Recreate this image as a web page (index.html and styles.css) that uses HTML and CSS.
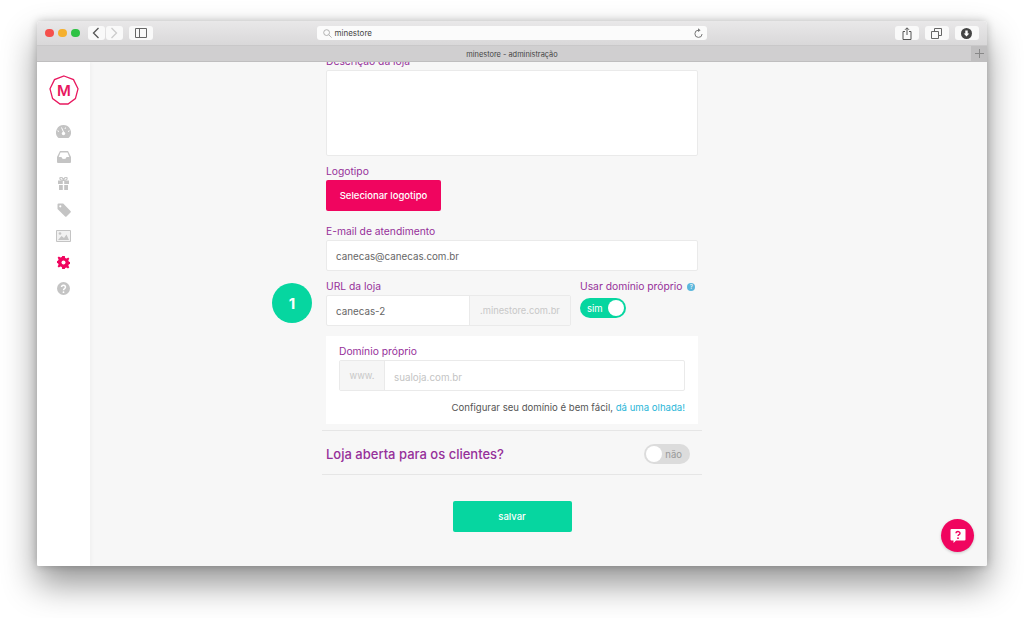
FILE: index.html
```html
<!DOCTYPE html>
<html lang="pt-BR">
  <head>
    <meta charset="UTF-8" />
    <meta name="viewport" content="width=device-width, initial-scale=1.0" />
    <title>minestore - administração</title>
    <link rel="stylesheet" href="styles.css">
  </head>
  <body>
    <div class="window">
      <div class="toolbar">
        <div class="lights">
          <span class="light red"></span>
          <span class="light yellow"></span>
          <span class="light green"></span>
        </div>
        <div class="nav-group">
          <span class="tool-btn nav-btn">
            <svg width="8" height="12" viewBox="0 0 8 12"><path d="M6.5 1L1.5 6l5 5" fill="none" stroke="#555" stroke-width="1.3"/></svg>
          </span>
          <span class="tool-btn nav-btn">
            <svg width="8" height="12" viewBox="0 0 8 12"><path d="M1.5 1l5 5-5 5" fill="none" stroke="#ccc" stroke-width="1.3"/></svg>
          </span>
        </div>
        <span class="tool-btn side-btn">
          <svg width="12" height="10" viewBox="0 0 12 10"><path d="M.5.5h11v9H.5zM4.5.5v9" fill="none" stroke="#666" stroke-width="1"/></svg>
        </span>
        <div class="url-bar">
          <svg width="9" height="9" viewBox="0 0 9 9"><circle cx="3.6" cy="3.6" r="2.9" fill="none" stroke="#aaa" stroke-width=".9"/><path d="M5.8 5.8L8.6 8.6" stroke="#aaa" stroke-width=".9"/></svg>
          <span class="url-text">minestore</span>
          <svg class="reload" width="10" height="11" viewBox="0 0 10 11"><path d="M5.5 2.2a3.6 3.6 0 1 0 3.6 3.8" fill="none" stroke="#777" stroke-width="1"/><path d="M5 .2l2.6 2L5 4z" fill="#777"/></svg>
        </div>
        <div class="right-tools">
          <span class="tool-btn right-btn">
            <svg width="10" height="13" viewBox="0 0 10 13"><path d="M3 4.5H1v8h8v-8H7M5 8V1M3 2.8L5 .8l2 2" fill="none" stroke="#555" stroke-width="1"/></svg>
          </span>
          <span class="tool-btn right-btn">
            <svg width="11" height="11" viewBox="0 0 11 11"><path d="M3.5 3V.5h7v7H8M.5 3.5h7v7h-7z" fill="none" stroke="#666" stroke-width="1"/></svg>
          </span>
          <span class="tool-btn right-btn">
            <svg width="11" height="11" viewBox="0 0 11 11"><circle cx="5.5" cy="5.5" r="5.5" fill="#444"/><path d="M4.3 2.4h2.4v3h1.6L5.5 8.6 2.7 5.4h1.6z" fill="#fff"/></svg>
          </span>
        </div>
      </div>

      <div class="tabbar">
        <span class="tab-title">minestore - administração</span>
        <span class="tab-plus">
          <svg width="9" height="9" viewBox="0 0 9 9"><path d="M4.5 0v9M0 4.5h9" stroke="#888" stroke-width="1"/></svg>
        </span>
      </div>

      <div class="app">
        <div class="sidebar">
          <svg class="logo" width="30" height="30" viewBox="0 0 30 30">
            <path d="M15 1l9.5 3.6 4.5 9.2-2.600 9.800L19 29h-8l-7.400-5.400L1 13.800l4.500-9.200z" fill="none" stroke="#e8185f" stroke-width="1.300"/>
            <text x="15" y="20.500" text-anchor="middle" class="logo-m">M</text>
          </svg>
          <ul class="menu">
            <li>
              <svg width="15" height="13" viewBox="0 0 15 13"><path d="M7.500 0a7.500 7.500 0 0 0-6 12l1 1h10l1-1a7.500 7.500 0 0 0-6-12z" fill="#c4c4c4"/><path d="M7.500 7L5.500 2.500M3 6.500l-1.500-.7M12 6.500l1.500-.7M9.500 2.500L9 4" stroke="#fff" stroke-width="1"/><circle cx="7.500" cy="8.500" r="1.700" fill="#fff"/></svg>
            </li>
            <li>
              <svg width="14" height="12" viewBox="0 0 14 12"><path d="M3 0h8l3 6v5a1 1 0 0 1-1 1H1a1 1 0 0 1-1-1V6z" fill="#c4c4c4"/><path d="M3.500 1.500h7l1.800 4.500H9.500a2.500 2 0 0 1-5 0H1.700z" fill="#fff"/></svg>
            </li>
            <li>
              <svg width="13" height="13" viewBox="0 0 13 13"><path d="M1 3.500h4.800V7H1zM7.200 3.500H12V7H7.200zM2 8h3.800v5H2zM7.200 8H11v5H7.200z" fill="#c4c4c4"/><path d="M6.500 3.500C4 3.500 2.500 2.500 3 1s3-.8 3.500 2.500C7 .2 9.500-.5 10 1s-1 2.500-3.500 2.500z" fill="none" stroke="#c4c4c4" stroke-width="1.200"/></svg>
            </li>
            <li>
              <svg width="14" height="14" viewBox="0 0 14 14"><path d="M.5 1.500a1 1 0 0 1 1-1h4.700L13.500 8a1 1 0 0 1 0 1.400l-4 4a1 1 0 0 1-1.400 0L.5 6z" fill="#c4c4c4"/><circle cx="3.300" cy="3.300" r="1.100" fill="#fff"/></svg>
            </li>
            <li>
              <svg width="15" height="12" viewBox="0 0 15 12"><path d="M.5.500h14v11H.500z" fill="#f1f1f1" stroke="#c4c4c4"/><path d="M2 10l3.500-4 2.500 2 2.500-3.500L13 10z" fill="#c4c4c4"/><circle cx="4" cy="3.500" r="1.300" fill="#c4c4c4"/></svg>
            </li>
            <li>
              <svg width="13" height="13" viewBox="0 0 13 13"><path d="M5.200 0h2.600l.4 1.900 1.400.6L11.300 1.500l1 1.300-1 1.500.6 1.400 1.900.4v1.800l-1.900.4-.6 1.400 1 1.600-1.300 1.200-1.500-1-1.400.6L7.800 13H5.200l-.4-1.900-1.400-.6-1.600 1L.6 10.200l1-1.500L1 7.300-.1 6.900V5.100L1 4.700l.6-1.400-1-1.500L1.800 .6l1.600 1 1.400-.6z" fill="#f0055f"/><circle cx="6.500" cy="6.500" r="2" fill="#fff"/></svg>
            </li>
            <li>
              <svg width="13" height="13" viewBox="0 0 13 13"><circle cx="6.500" cy="6.500" r="6.500" fill="#c4c4c4"/><path d="M4.500 5a2 1.800 0 1 1 3 1.600c-.7.400-1 .8-1 1.600" fill="none" stroke="#fff" stroke-width="1.500"/><circle cx="6.500" cy="10.200" r=".9" fill="#fff"/></svg>
            </li>
          </ul>
        </div>

        <div class="main">
          <form class="form">
            <label class="label">Descrição da loja</label>
            <div class="field textarea"></div>

            <label class="label">Logotipo</label>
            <button type="button" class="btn btn-pink">Selecionar logotipo</button>

            <label class="label">E-mail de atendimento</label>
            <div class="field input">canecas@canecas.com.br</div>

            <div class="url-row">
              <span class="step">1</span>
              <div class="url-col">
                <label class="label">URL da loja</label>
                <div class="field group">
                  <span class="group-value">canecas-2</span>
                  <span class="addon addon-right">.minestore.com.br</span>
                </div>
              </div>
              <div class="own-col">
                <label class="label">Usar domínio próprio
                  <span class="hint">?</span>
                </label>
                <span class="switch switch-on">
                  <span class="switch-text">sim</span>
                  <span class="knob"></span>
                </span>
              </div>
            </div>

            <div class="domain-card">
              <label class="label">Domínio próprio</label>
              <div class="field group">
                <span class="addon addon-left">www.</span>
                <span class="group-value placeholder">sualoja.com.br</span>
              </div>
              <p class="domain-help">Configurar seu domínio é bem fácil, <a href="#">dá uma olhada!</a></p>
            </div>

            <div class="open-row">
              <span class="open-title">Loja aberta para os clientes?</span>
              <span class="switch switch-off">
                <span class="knob"></span>
                <span class="switch-text">não</span>
              </span>
            </div>

            <div class="actions">
              <button type="button" class="btn btn-green">salvar</button>
            </div>
          </form>

          <span class="fab">
            <svg width="16" height="16" viewBox="0 0 16 16"><path d="M1.500 1h13a1 1 0 0 1 1 1v9.500a1 1 0 0 1-1 1H6L3.500 15v-2.500h-2a1 1 0 0 1-1-1V2a1 1 0 0 1 1-1z" fill="#fff"/><path d="M6 5.200a2 1.700 0 1 1 3 1.500c-.7.400-1 .7-1 1.400" fill="none" stroke="#f0055f" stroke-width="1.400"/><circle cx="8" cy="10.200" r=".9" fill="#f0055f"/></svg>
          </span>
        </div>
      </div>
    </div>
  </body>
</html>
```

FILE: styles.css
```css
* {
  box-sizing: border-box;
  margin: 0;
  padding: 0;
}

body {
  font-family: "Inter", "Liberation Sans", sans-serif;
  background-color: #fff;
  width: 1024px;
  height: 618px;
  padding: 21px 37px 52px;
  overflow: hidden;
  color: #666;
}

.window {
  height: 545px;
  display: flex;
  flex-direction: column;
  border-radius: 4px 4px 2px 2px;
  overflow: hidden;
  box-shadow: 0 18px 34px rgba(0, 0, 0, 0.42), 0 0 8px rgba(0, 0, 0, 0.22);
}

/* barra do navegador */
.toolbar {
  height: 25px;
  flex-shrink: 0;
  display: flex;
  align-items: center;
  padding: 0 8px;
  background: linear-gradient(to bottom, #e9e8e9, #d9d8d9);
  border-bottom: 1px solid #c9c8c9;
}

.lights {
  display: flex;
  gap: 4.500px;
  margin-right: 8px;
}

.light {
  width: 8.500px;
  height: 8.500px;
  border-radius: 50%;
}

.red {
  background-color: #f5504c;
}

.yellow {
  background-color: #f5b02e;
}

.green {
  background-color: #2ec244;
}

.tool-btn {
  height: 14px;
  display: flex;
  align-items: center;
  justify-content: center;
  background-color: #f9f9f9;
  border-radius: 3px;
}

.nav-group {
  display: flex;
  gap: 1px;
  margin-right: 6px;
}

.nav-btn {
  width: 17px;
}

.side-btn {
  width: 24px;
  margin-right: 164px;
}

.url-bar {
  width: 390px;
  height: 14px;
  display: flex;
  align-items: center;
  padding: 0 4px 0 6px;
  background-color: #fbfbfb;
  border-radius: 3px;
}

.url-text {
  font-size: 8px;
  color: #444;
  margin-left: 3px;
  flex: 1;
}

.right-tools {
  display: flex;
  gap: 5.500px;
  margin-left: 188px;
}

.right-btn {
  width: 24.500px;
}

.tabbar {
  height: 16px;
  padding-top: 1px;
  flex-shrink: 0;
  display: flex;
  align-items: center;
  justify-content: center;
  position: relative;
  background-color: #d0cfd0;
  border-bottom: 1px solid #bfbebf;
}

.tab-title {
  font-size: 7.400px;
  color: #444;
}

.tab-plus {
  position: absolute;
  right: 0;
  top: 0;
  width: 16px;
  height: 15px;
  display: flex;
  align-items: center;
  justify-content: center;
  background-color: #c0bfc0;
}

/* aplicação */
.app {
  flex: 1;
  display: flex;
  min-height: 0;
  background-color: #f7f7f7;
}

.sidebar {
  width: 53px;
  flex-shrink: 0;
  background-color: #fff;
  display: flex;
  flex-direction: column;
  align-items: center;
  padding-top: 13px;
  box-shadow: 1px 0 4px rgba(0, 0, 0, 0.04);
}

.logo-m {
  font-family: "Inter", sans-serif;
  font-size: 15px;
  font-weight: 600;
  fill: #e8185f;
}

.menu {
  list-style: none;
  margin-top: 13px;
}

.menu li {
  height: 26.200px;
  display: flex;
  align-items: center;
  justify-content: center;
}

.main {
  flex: 1;
  position: relative;
  overflow: hidden;
}

.form {
  width: 372px;
  margin: -8px 0 0 236px;
}

.label {
  display: block;
  font-size: 10.300px;
  line-height: 14px;
  color: #96309a;
  margin-bottom: 2px;
}

.field {
  background-color: #fff;
  border: 1px solid #eaeaea;
  border-radius: 2px;
}

.textarea {
  height: 86px;
  margin-bottom: 8px;
}

.input {
  height: 31px;
  line-height: 31px;
  padding: 0 9px;
  font-size: 9.800px;
  color: #666;
  margin-bottom: 8px;
}

.btn {
  display: block;
  border: none;
  border-radius: 2px;
  color: #fff;
  font-family: inherit;
  font-weight: 500;
  cursor: pointer;
}

.btn-pink {
  width: 115px;
  height: 31px;
  font-size: 9.500px;
  background-color: #f0055f;
  margin-bottom: 13px;
}

.btn-green {
  width: 119px;
  height: 31px;
  font-size: 9.500px;
  background-color: #06d6a0;
}

.url-row {
  display: flex;
  position: relative;
}

.step {
  position: absolute;
  left: -54px;
  top: 4px;
  width: 40px;
  height: 40px;
  border-radius: 50%;
  background-color: #06d6a0;
  color: #fff;
  font-size: 15px;
  font-weight: 700;
  display: flex;
  align-items: center;
  justify-content: center;
}

.url-col {
  width: 245px;
  flex-shrink: 0;
  margin-right: 9px;
}

.group {
  display: flex;
  height: 31px;
  overflow: hidden;
}

.group-value {
  flex: 1;
  line-height: 31px;
  padding: 0 9px;
  font-size: 9.800px;
  color: #666;
}

.placeholder {
  color: #c4c4c4;
  line-height: 33px;
}

.addon {
  background-color: #f6f6f6;
  color: #c8c8c8;
  font-size: 9.300px;
  line-height: 29px;
  text-align: center;
}

.addon-right {
  width: 101px;
  border-left: 1px solid #eaeaea;
}

.addon-left {
  width: 45px;
  border-right: 1px solid #eaeaea;
}

.own-col {
  flex: 1;
  min-width: 0;
  white-space: nowrap;
}

.hint {
  display: inline-block;
  width: 8px;
  height: 8px;
  margin-left: 2px;
  border-radius: 50%;
  background-color: #5bb7dc;
  color: #fff;
  font-size: 6px;
  line-height: 8px;
  text-align: center;
  vertical-align: 1px;
}

.switch {
  display: flex;
  align-items: center;
  justify-content: space-between;
  width: 46px;
  height: 20px;
  border-radius: 10px;
  padding: 0 2px;
  font-size: 9.500px;
}

.switch-on {
  background-color: #06d6a0;
  color: #fff;
  margin-top: 5px;
  padding-left: 7px;
}

.switch-off {
  background-color: #dcdcdc;
  color: #999;
  padding-right: 8px;
}

.knob {
  width: 16px;
  height: 16px;
  border-radius: 50%;
  background-color: #fff;
}

.domain-card {
  margin-top: 10px;
  height: 88px;
  padding: 8px 13px 0;
  background-color: #fff;
}

.domain-help {
  font-size: 9.600px;
  line-height: 12px;
  text-align: right;
  margin-top: 11px;
  color: #555;
}

.domain-help a {
  color: #29b6d8;
  text-decoration: none;
}

.open-row {
  display: flex;
  align-items: center;
  justify-content: space-between;
  height: 45px;
  margin: 6px -4px 0;
  padding: 3px 12px 0 4px;
  border-top: 1px solid #e6e6e6;
  border-bottom: 1px solid #e6e6e6;
}

.open-title {
  font-size: 13px;
  font-weight: 500;
  color: #96309a;
}

.actions {
  display: flex;
  justify-content: center;
  margin-top: 26px;
}

.fab {
  position: absolute;
  right: 13px;
  bottom: 14px;
  width: 33px;
  height: 33px;
  border-radius: 50%;
  background-color: #f0055f;
  display: flex;
  align-items: center;
  justify-content: center;
  box-shadow: 0 1px 3px rgba(0, 0, 0, 0.2);
}
```
